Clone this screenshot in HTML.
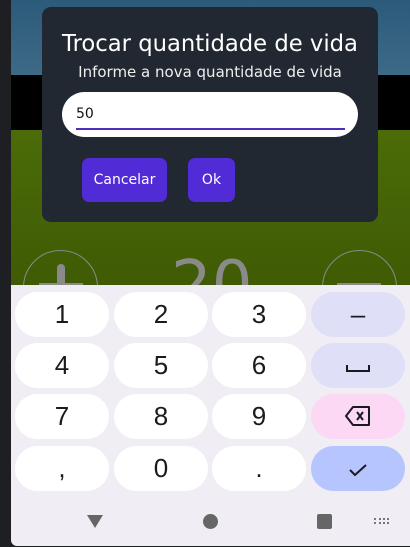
<!DOCTYPE html><html><head><style>
*{margin:0;padding:0;box-sizing:border-box}
body{width:410px;height:547px;overflow:hidden;background:#1e1f22;font-family:"Liberation Sans",sans-serif;position:relative}
.scr{position:absolute;left:11px;top:0;width:399px;height:546px;overflow:hidden;border-bottom-left-radius:6px}
.blue{position:absolute;left:0;top:0;width:399px;height:75px;background:linear-gradient(#2c5a7a,#3d6a86)}
.black{position:absolute;left:0;top:75px;width:399px;height:55px;background:#000}
.green{position:absolute;left:0;top:130px;width:399px;height:160px;background:linear-gradient(#4b6c08,#3f5a04)}
.circ{position:absolute;top:250px;width:75px;height:75px;border:1.5px solid #8a8a8a;border-radius:50%}
.big{position:absolute;top:248px;left:160px;font-size:64px;color:#8a8a8a;font-family:"DejaVu Sans",sans-serif}
.dlg{position:absolute;left:31px;top:7px;width:336px;height:215px;background:#222831;border-radius:9px;color:#fff;text-align:center}
.t{position:absolute;top:24px;width:100%;font-size:22.7px;font-family:"DejaVu Sans",sans-serif}
.s{position:absolute;top:56px;width:100%;font-size:15px;font-family:"DejaVu Sans",sans-serif;color:#eee}
.inp{position:absolute;left:20px;top:85px;width:296px;height:45px;background:#fff;border-radius:23px}
.inp span{position:absolute;left:14px;top:14px;color:#111;font-size:14px;font-family:"DejaVu Sans",sans-serif}
.inp i{position:absolute;left:14px;top:36px;width:269px;height:2px;background:#4b2fbf}
.btn{position:absolute;top:151px;height:44px;background:#512bd6;border-radius:7px;font-size:14px;line-height:44px;font-family:"DejaVu Sans",sans-serif}
.kb{position:absolute;left:0;top:285px;width:399px;height:261px;background:#f0eef4}
.k{position:absolute;width:94px;height:45px;border-radius:23px;background:#fff;text-align:center;line-height:45px;font-size:26px;color:#1b1b1f;font-family:"Liberation Sans",sans-serif}
.f{background:#dfe0f8}
.pm{position:absolute;background:#8a8a8a}
</style></head><body><div class="scr">
<div class="blue"></div><div class="black"></div><div class="green"></div>
<div class="circ" style="left:12px"></div><div class="circ" style="left:311px"></div>
<div class="pm" style="left:46px;top:264px;width:8px;height:30px;border-radius:4px"></div>
<div class="pm" style="left:28px;top:283px;width:44px;height:6px"></div>
<div class="pm" style="left:326px;top:283px;width:44px;height:6px"></div>
<div class="big">20</div>
<div class="dlg"><div class="t">Trocar quantidade de vida</div><div class="s">Informe a nova quantidade de vida</div>
<div class="inp"><span>50</span><i></i></div>
<div class="btn" style="left:40px;width:85px">Cancelar</div><div class="btn" style="left:146px;width:47px">Ok</div></div>
<div class="kb">
<div class="k" style="left:4px;top:7px">1</div><div class="k" style="left:103px;top:7px">2</div><div class="k" style="left:201px;top:7px">3</div><div class="k f" style="left:300px;top:7px">–</div>
<div class="k" style="left:4px;top:58px">4</div><div class="k" style="left:103px;top:58px">5</div><div class="k" style="left:201px;top:58px">6</div><div class="k f" style="left:300px;top:58px"><svg width="24" height="12" viewBox="0 0 24 12" style="margin-top:16px"><path d="M1 3V9H23V3" stroke="#1b1b1f" stroke-width="2" fill="none"/></svg></div>
<div class="k" style="left:4px;top:109px">7</div><div class="k" style="left:103px;top:109px">8</div><div class="k" style="left:201px;top:109px">9</div><div class="k" style="left:300px;top:109px;background:#fdd8f4"><svg width="26" height="20" viewBox="0 0 26 20" style="margin-top:12px"><path d="M8 1H24V19H8L1 10Z" stroke="#1b1b1f" stroke-width="2" fill="none" stroke-linejoin="round"/><path d="M12 6L18 14M18 6L12 14" stroke="#1b1b1f" stroke-width="2"/></svg></div>
<div class="k" style="left:4px;top:161px">,</div><div class="k" style="left:103px;top:161px">0</div><div class="k" style="left:201px;top:161px">.</div><div class="k" style="left:300px;top:161px;background:#b6c5fd"><svg width="20" height="14" viewBox="0 0 20 14" style="margin-top:15px"><path d="M2 7L7 12L18 2" stroke="#1b1b1f" stroke-width="2" fill="none"/></svg></div>
<svg style="position:absolute;left:76px;top:230px" width="16" height="13"><path d="M0 0H16L8 13Z" fill="#666"/></svg>
<div style="position:absolute;left:192px;top:229px;width:15px;height:15px;border-radius:50%;background:#666"></div>
<div style="position:absolute;left:306px;top:229px;width:15px;height:15px;border-radius:2px;background:#666"></div>
<div style="position:absolute;left:363px;top:233px;width:15px;height:6px;border-top:2px dotted #777;border-bottom:2px dotted #777"></div>
</div></div></body></html>
